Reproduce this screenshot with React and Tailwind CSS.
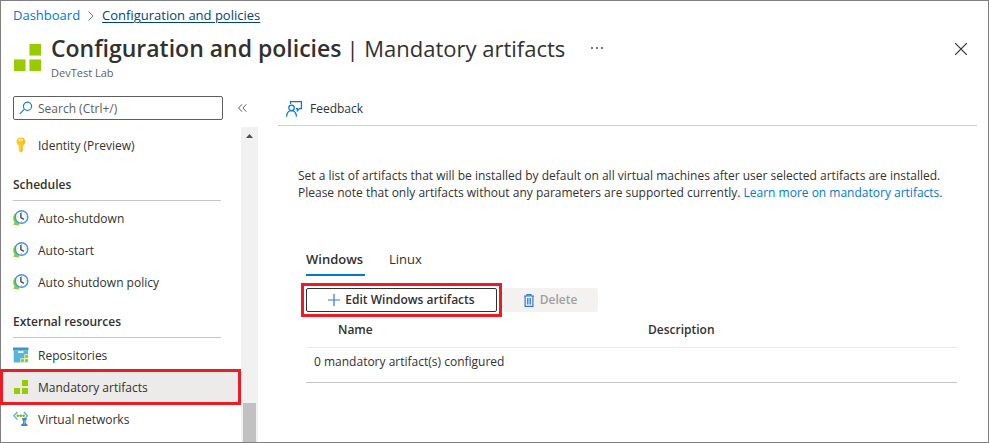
function Blocks({ className }) {
  return (
    <svg className={className} viewBox="0 0 28 28" fill="#99cc00" aria-hidden="true">
      <rect x="16" y="0" width="12" height="12" />
      <rect x="0" y="16" width="12" height="12" />
      <rect x="16" y="16" width="12" height="12" />
    </svg>
  );
}

function KeyIcon() {
  return (
    <svg className="size-4" viewBox="0 0 16 16" aria-hidden="true">
      <path d="M5.800 7h4v7L8 15.500 5.800 13.700z" fill="#fdb813" />
      <path d="M7.800.5c2.600 0 4.300 1.600 4.300 4.100S10.200 9 7.800 9 3.500 7.100 3.500 4.600 5.200.5 7.800.5z" fill="#ffc81b" />
      <path d="M5.600 2.300h4.400v1.200H5.600z" fill="#fff" />
      <path d="M6.500 8.500h1v5.700l-1-.7z" fill="#ffe27a" />
      <path d="M9.200.7c1.900.6 2.900 1.900 2.900 3.900 0 1.900-.9 3.200-2.500 4C11 6 11 3.500 9.200.7z" fill="#f9a31a" opacity=".55" />
    </svg>
  );
}

function ClockIcon() {
  return (
    <svg className="size-4" viewBox="0 0 16 16" aria-hidden="true">
      <path d="M2.500 3C-.6 6-.4 10 1.600 12.300L.3 14.800l6 .7-1-4z" fill="#7fd13b" />
      <circle cx="8.500" cy="7" r="6.300" fill="#f6f9fc" stroke="#4a97d3" strokeWidth="1.400" />
      <path d="M7.900 3v4.600l2.900 1.700" fill="none" stroke="#4b4b4b" strokeWidth="1.400" />
      <path d="M8.500 1.800v1M8.500 11.200v1M3.400 7h1M12.600 7h1" stroke="#9aa7b3" strokeWidth=".8" />
    </svg>
  );
}

function RepoIcon() {
  return (
    <svg className="size-4" viewBox="0 0 16 16" aria-hidden="true">
      <path d="M0 .5h15.500v3H0z" fill="#3999c6" />
      <path d="M.7 3.500h14.300V15.500H.7z" fill="#59b4d9" />
      <path d="M5 4.200h5.500v1.600H5z" fill="#fff" />
      <path d="M11.300 7.300H15.500v8.200H7.300v-4.200h4z" fill="#e3f1c8" />
      <path d="M12.200 8.200h2.600v2.600h-2.600zM8.200 12.200h2.600v2.600H8.200zM12.200 12.200h2.600v2.600h-2.600z" fill="#86bf12" />
    </svg>
  );
}

function NetworkIcon() {
  return (
    <svg className="size-4" viewBox="0 0 16 16" aria-hidden="true">
      <path d="M4.400 1L.9 4.800l3.500 3.800M10.900 1l3.500 3.800-3.500 3.800" fill="none" stroke="#59b4d9" strokeWidth="1.400" />
      <path d="M4 4.800h7.500" stroke="#7fba00" strokeWidth=".8" />
      <circle cx="4.700" cy="4.800" r="1.200" fill="#7fba00" />
      <circle cx="7.700" cy="4.800" r="1.200" fill="#7fba00" />
      <circle cx="10.700" cy="4.800" r="1.200" fill="#7fba00" />
      <path d="M9.200 7h4.400v2.200h-.9v3l1.700 1.300V15H8.200v-1.500l1.800-1.300v-3h-.8z" fill="#3f86c0" />
      <path d="M10.800 9.300h.9v4h-.9z" fill="#8fc3e6" />
    </svg>
  );
}

function SearchIcon() {
  return (
    <svg className="size-[14px] shrink-0" viewBox="0 0 14 14" fill="none" stroke="#1b7fd6" strokeWidth="1.200" aria-hidden="true">
      <circle cx="8.500" cy="5.200" r="4.100" />
      <path d="M5.500 8.200L.8 12.900" />
    </svg>
  );
}

function FeedbackIcon() {
  return (
    <svg className="size-4" viewBox="0 0 16 16" fill="none" stroke="#0078d4" strokeWidth="1.200" aria-hidden="true">
      <path d="M4.500 3V.6h10.900v7h-1.900L11.400 9.800V7.600H9.800" />
      <circle cx="5.500" cy="6.900" r="2.700" />
      <path d="M.6 15.700c.2-3.700 2-6 4.900-6s4.700 2.300 4.900 6" />
    </svg>
  );
}

function TrashIcon() {
  return (
    <svg className="h-[13px] w-[10px]" viewBox="0 0 10 13" fill="none" stroke="#2f78e0" aria-hidden="true">
      <path d="M0 2h10M3 2V.6h4V2M1.100 2v10.400h7.800V2" strokeWidth="1.200" />
      <path d="M3.500 4v6.500M5 4v6.500M6.500 4v6.500" strokeWidth=".9" />
    </svg>
  );
}

function NavItem({ icon, children, active }) {
  return (
    <li className="relative">
      <a
        href="#"
        aria-current={active ? "page" : undefined}
        className={`flex h-8 items-center gap-[9px] pl-3 ${active ? "bg-[#edebe9]" : ""}`}
      >
        <span className="flex w-4 justify-center">{icon}</span>
        <span className="pt-0.5">{children}</span>
      </a>
      {active && <span className="pointer-events-none absolute -top-0.5 -bottom-0.5 right-0 -left-px border-3 border-[#ed1c24]" />}
    </li>
  );
}

function NavHeading({ children }) {
  return (
    <h2 className="mr-5 mb-px ml-3 h-10 border-b border-[#c8c6c4] pt-[15px] leading-[18px] font-semibold">
      {children}
    </h2>
  );
}

export default function App() {
  return (
    <div className="flex min-h-screen flex-col border border-[#7f7f7f] bg-white font-['Open_Sans','Noto_Sans',sans-serif] text-[12px] text-[#323130]">
      <nav aria-label="Breadcrumb" className="flex h-7 items-center gap-2 pt-0.5 pl-3 text-[13px]">
        <a href="#" className="text-[#0078d4]">Dashboard</a>
        <svg className="h-[10px] w-[6px]" viewBox="0 0 6 10" fill="none" stroke="#797775" aria-hidden="true">
          <path d="M.5.5L5 5 .5 9.500" />
        </svg>
        <a href="#" className="text-[#004578] underline underline-offset-2">Configuration and policies</a>
      </nav>

      <header className="flex h-[67px] items-start pr-[21px] pl-[13px]">
        <Blocks className="mt-[15px] size-[27px] shrink-0" />
        <div className="ml-[10px]">
          <div className="flex h-9 items-center pt-0.5">
            <h1 className="flex gap-[5px] text-[22px] leading-8 whitespace-nowrap">
              <span className="text-[23px] font-semibold">Configuration and policies</span>
              <span>| Mandatory artifacts</span>
            </h1>
            <button aria-label="More" className="ml-[26px] flex gap-[3px]">
              <span className="size-[2px] bg-[#797775]" />
              <span className="size-[2px] bg-[#797775]" />
              <span className="size-[2px] bg-[#797775]" />
            </button>
          </div>
          <p className="text-[11px] leading-4 text-[#605e5c]">DevTest Lab</p>
        </div>
        <button aria-label="Close" className="mt-[14px] ml-auto">
          <svg className="size-3" viewBox="0 0 12 12" stroke="#323130" strokeWidth="1.200" aria-hidden="true">
            <path d="M0 0l12 12M12 0L0 12" />
          </svg>
        </button>
      </header>

      <div className="flex grow">
        <aside className="flex w-[257px] shrink-0 flex-col">
          <div className="flex items-center pl-3">
            <label className="flex h-6 w-[210px] items-center gap-[5px] rounded-[2px] border border-[#605e5c] px-[5px]">
              <SearchIcon />
              <input
                type="text"
                aria-label="Search"
                placeholder="Search (Ctrl+/)"
                className="min-w-0 grow pt-0.5 outline-none placeholder:text-[#605e5c]"
              />
            </label>
            <button aria-label="Collapse menu" className="ml-[15px]">
              <svg className="h-2 w-[9px]" viewBox="0 0 9 8" fill="none" stroke="#605e5c" aria-hidden="true">
                <path d="M4 .3L.6 4 4 7.700M8.300.3L4.900 4l3.400 3.700" />
              </svg>
            </button>
          </div>
          <div className="mt-[7px] flex grow">
            <div className="grow pt-0.5">
              <ul>
                <NavItem icon={<KeyIcon />}>Identity (Preview)</NavItem>
              </ul>
              <NavHeading>Schedules</NavHeading>
              <ul>
                <NavItem icon={<ClockIcon />}>Auto-shutdown</NavItem>
                <NavItem icon={<ClockIcon />}>Auto-start</NavItem>
                <NavItem icon={<ClockIcon />}>Auto shutdown policy</NavItem>
              </ul>
              <NavHeading>External resources</NavHeading>
              <ul>
                <NavItem icon={<RepoIcon />}>Repositories</NavItem>
                <NavItem icon={<Blocks className="size-[14px]" />} active>Mandatory artifacts</NavItem>
                <NavItem icon={<NetworkIcon />}>Virtual networks</NavItem>
              </ul>
            </div>
            <div className="flex w-[17px] flex-col items-center justify-between bg-[#f1f1f1] pt-[7px]">
              <svg className="h-1 w-[7px]" viewBox="0 0 7 4" fill="#505050" aria-hidden="true">
                <path d="M3.500 0L7 4H0z" />
              </svg>
              <div className="h-[39px] w-[13px] bg-[#c1c1c1]" />
            </div>
          </div>
        </aside>

        <main className="mr-[11px] ml-5 min-w-0 grow">
          <div className="flex h-[30px] items-center border-b border-[#d2d0ce] pb-1 pl-2">
            <button className="flex items-center gap-2">
              <FeedbackIcon />
              Feedback
            </button>
          </div>
          <div className="pr-5 pl-5">
            <p className="mt-[41px] leading-[17px]">
              Set a list of artifacts that will be installed by default on all virtual machines after user selected artifacts are installed.
              <br />
              Please note that only artifacts without any parameters are supported currently.{" "}
              <a href="#" className="text-[#0078d4]">Learn more on mandatory artifacts.</a>
            </p>
            <div className="mt-[47px] ml-2">
              <div role="tablist" className="flex gap-6 text-[13px]">
                <button role="tab" aria-selected="true" className="h-7 min-w-[59px] border-b-2 border-[#0078d4] pb-1 text-left leading-[18px] font-semibold">Windows</button>
                <button role="tab" aria-selected="false" className="h-7 border-b-2 border-transparent pb-1 leading-[18px]">Linux</button>
              </div>
              <div className="mt-3 flex gap-1.5">
                <div className="relative">
                  <button className="flex h-6 w-[191px] items-center justify-center gap-[5px] rounded-[2px] border border-[#323130] font-semibold">
                    <svg className="size-3" viewBox="0 0 12 12" stroke="#2f78e0" strokeWidth="1.200" aria-hidden="true">
                      <path d="M6 0v12M0 6h12" />
                    </svg>
                    Edit Windows artifacts
                  </button>
                  <span className="pointer-events-none absolute -inset-[5px] border-3 border-[#ed1c24]" />
                </div>
                <button disabled className="flex h-6 w-[95px] items-center justify-center gap-1.5 rounded-[2px] bg-[#f3f2f1] font-semibold text-[#a19f9d]">
                  <TrashIcon />
                  Delete
                </button>
              </div>
              <table className="w-full table-fixed border-collapse text-left">
                <thead>
                  <tr className="h-[35px] border-b border-[#edebe9]">
                    <th className="w-[310px] pt-0.5 pl-8 font-semibold">Name</th>
                    <th className="pt-0.5 pl-8 font-semibold">Description</th>
                  </tr>
                </thead>
                <tbody>
                  <tr className="h-[35px] border-b border-[#c8c6c4]">
                    <td colSpan="2" className="pb-1.5 pl-2">0 mandatory artifact(s) configured</td>
                  </tr>
                </tbody>
              </table>
            </div>
          </div>
        </main>
      </div>
    </div>
  );
}
